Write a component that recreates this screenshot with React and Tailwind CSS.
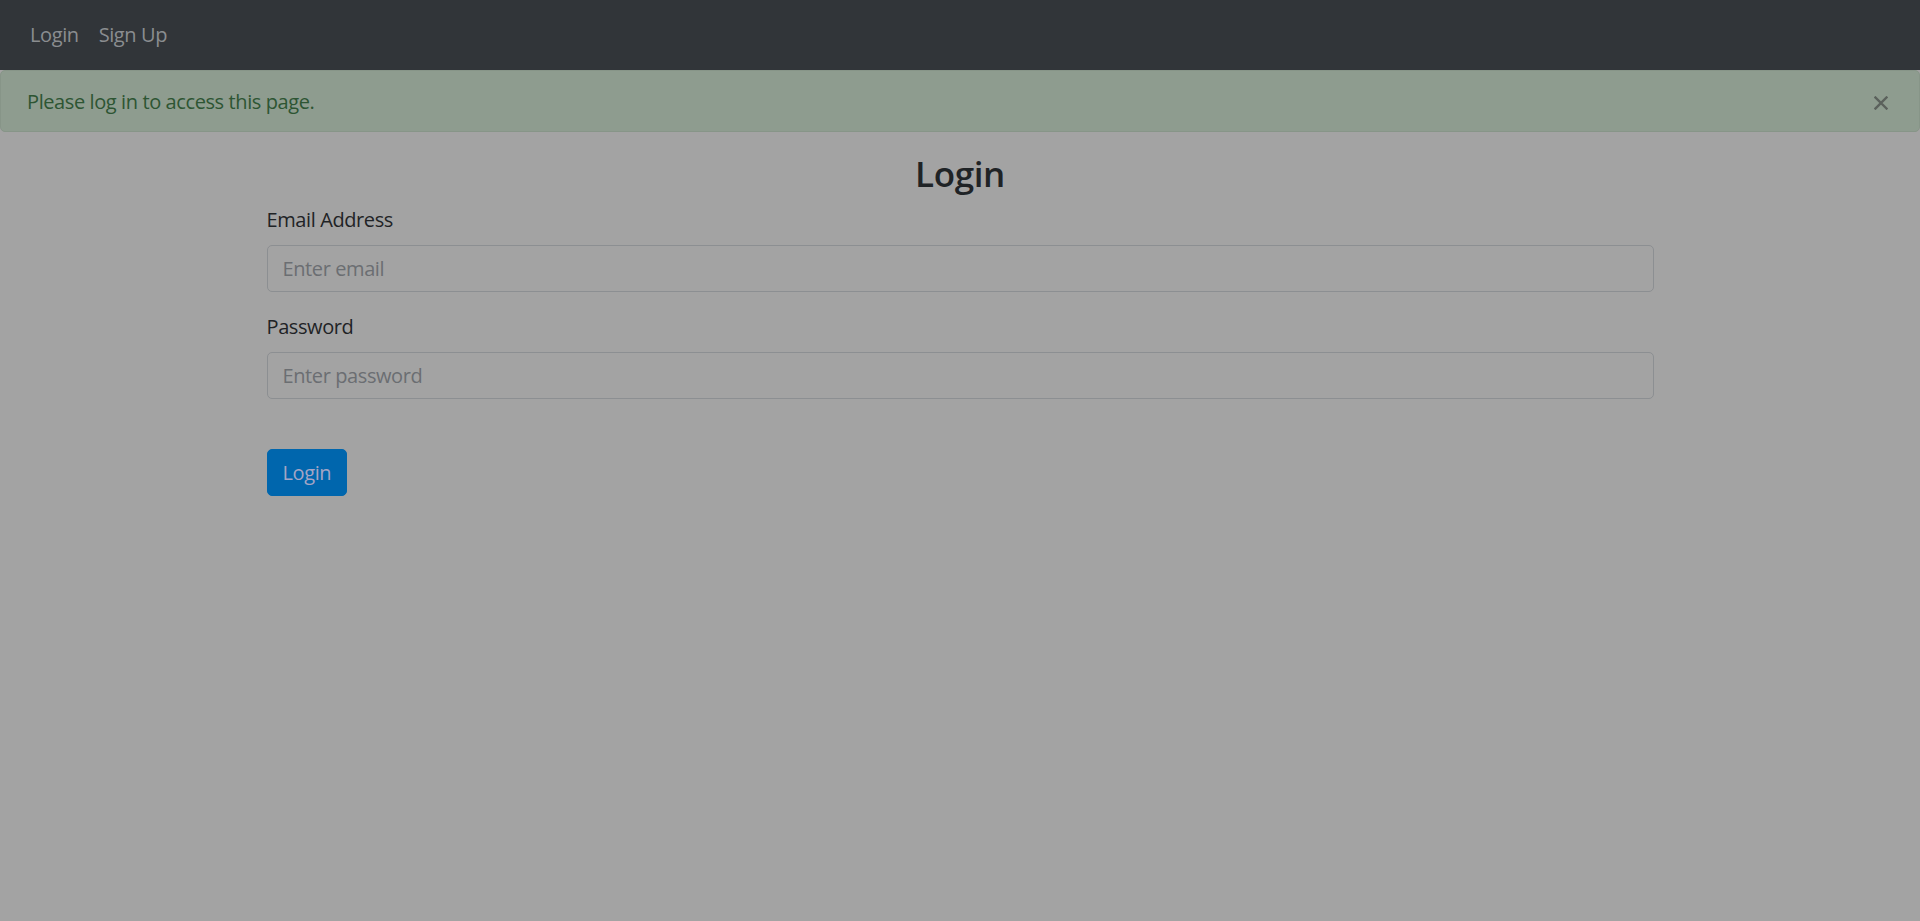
const App = () => {
  return (
    <div className="min-h-[921px] bg-[#a3a3a3] font-['Open_Sans',sans-serif] text-[20px] leading-[30px] tracking-[-0.4px]">
      {/* Navbar */}
      <nav className="h-[70px] bg-[#313539] px-[20px] flex items-center">
        <a href="#" className="px-[10px] text-[#8a8d90]">Login</a>
        <a href="#" className="px-[10px] text-[#8a8d90]">Sign Up</a>
      </nav>

      {/* Alert */}
      <div className="h-[62px] bg-[#8e9c8f] border border-[#879588] rounded-[5px] pl-[26px] pr-[31px] pt-[2px] flex items-center justify-between text-[#2d5533]">
        <span>Please log in to access this page.</span>
        <button className="pt-[2px] text-[#5b615c]">
          <svg width="14" height="14" viewBox="0 0 14 14" stroke="currentColor" strokeWidth="2.4" strokeLinecap="square">
            <path d="M1.5 1.5L12.5 12.5M12.5 1.5L1.5 12.5" />
          </svg>
        </button>
      </div>

      {/* Form */}
      <div className="w-[1425px] mx-auto px-[19px] pt-[21px]">
        <h3 className="text-center text-[35px] leading-[42px] font-semibold text-[#1f2326] mb-[10px]">Login</h3>
        <div className="mb-[20px]">
          <label className="block mb-[10px] text-[#1f2326]">Email Address</label>
          <input
            type="email"
            placeholder="Enter email"
            className="block w-full h-[47px] px-[15px] bg-[#a3a3a3] border border-[#8c8f92] rounded-[5px] text-[#1f2326] placeholder:text-[#6b6e72] outline-none"
          />
        </div>
        <div className="mb-[50px]">
          <label className="block mb-[10px] text-[#1f2326]">Password</label>
          <input
            type="password"
            placeholder="Enter password"
            className="block w-full h-[47px] px-[15px] bg-[#a3a3a3] border border-[#8c8f92] rounded-[5px] text-[#1f2326] placeholder:text-[#6b6e72] outline-none"
          />
        </div>
        <button className="h-[47px] px-[15px] bg-[#0066ad] border border-[#0066ad] rounded-[5px] text-[#a5a5c5]">Login</button>
      </div>
    </div>
  );
};

export default App;
